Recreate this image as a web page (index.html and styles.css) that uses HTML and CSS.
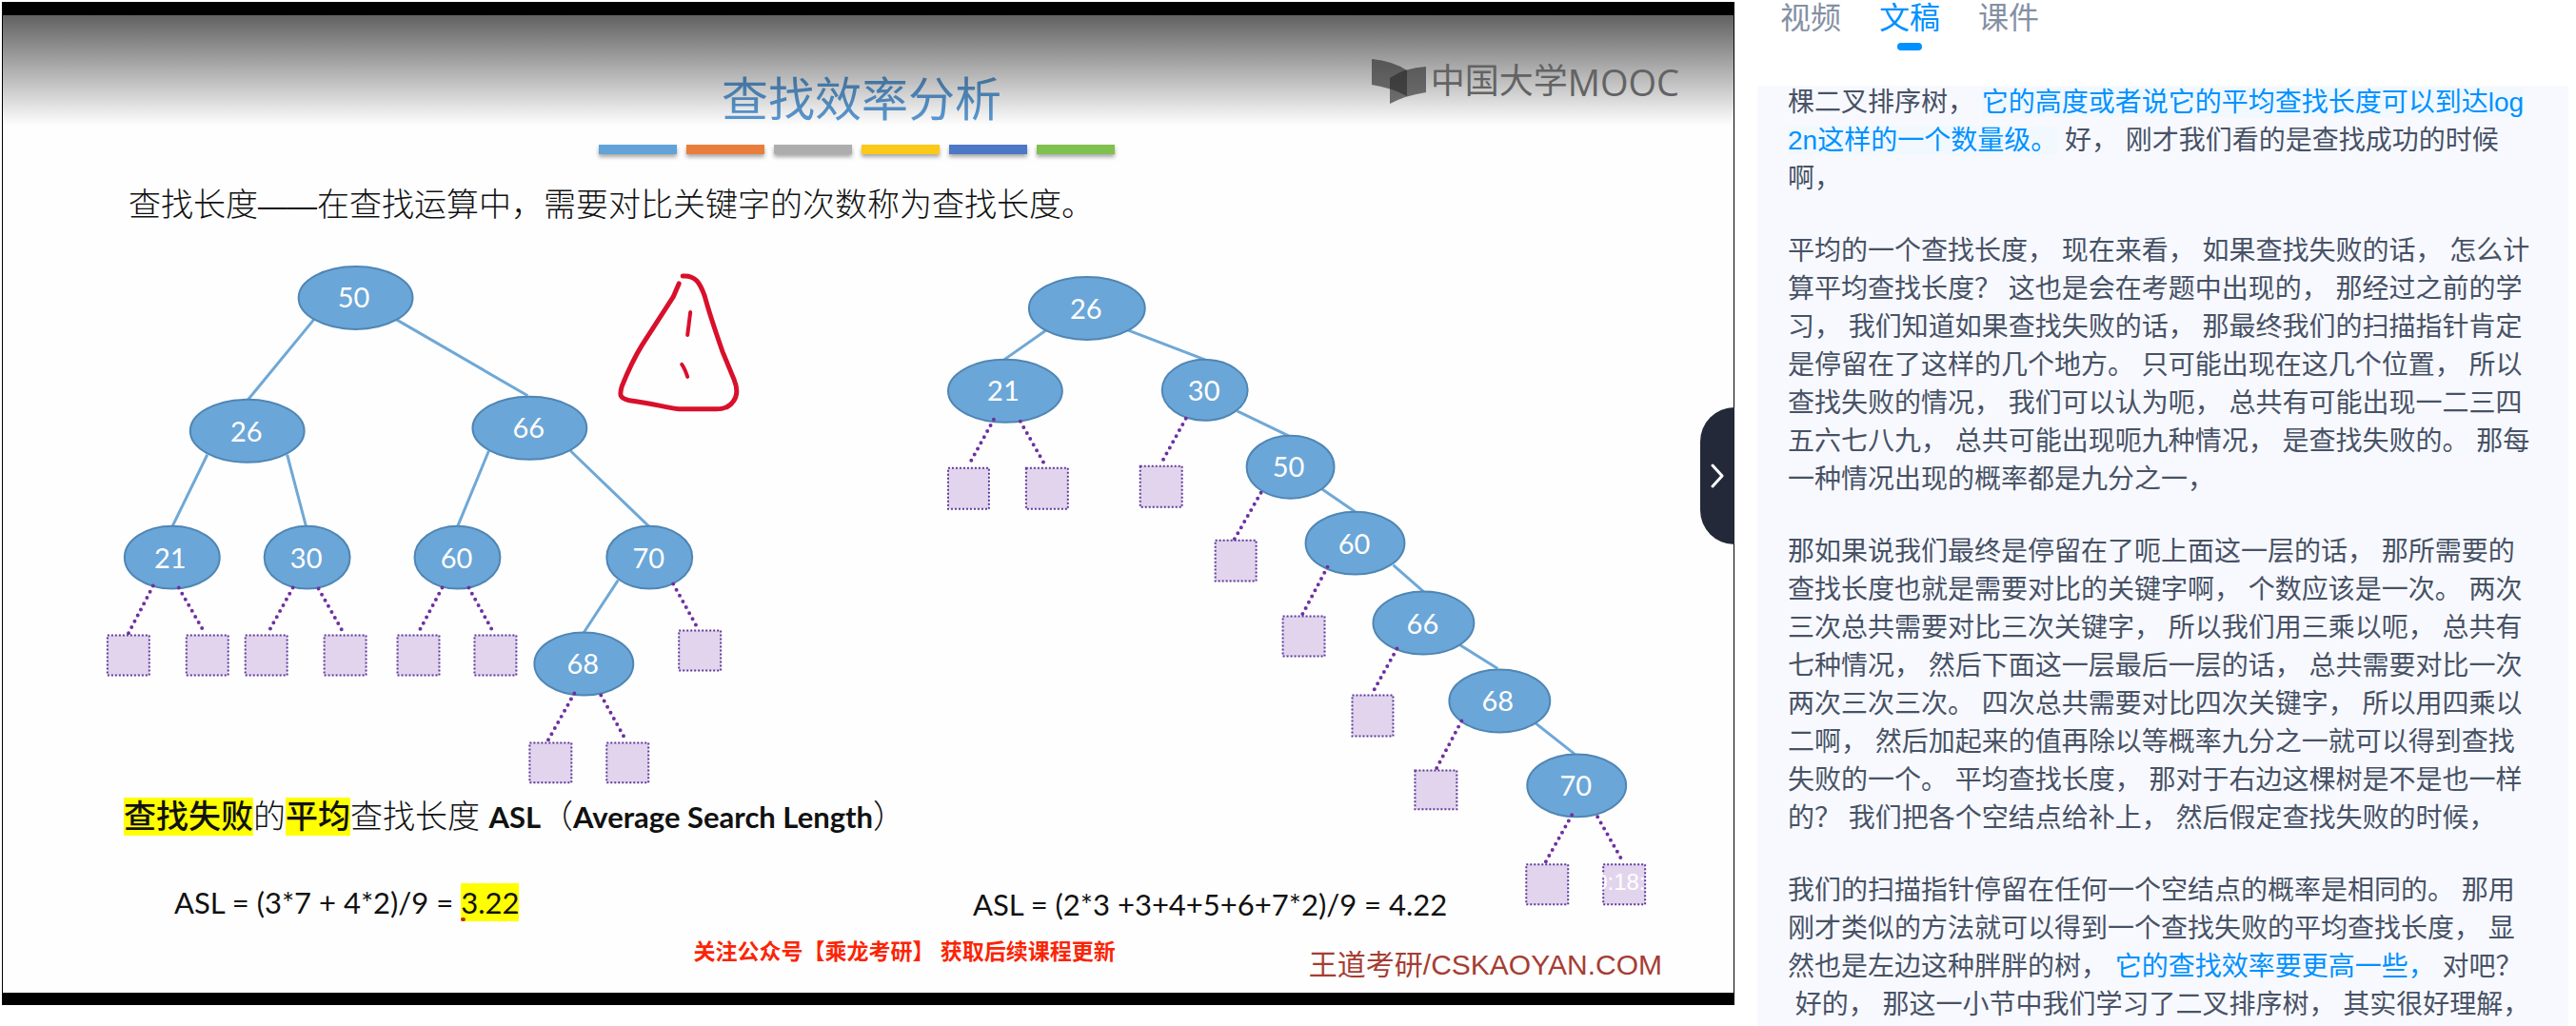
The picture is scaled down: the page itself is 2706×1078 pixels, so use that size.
FILE: index.html
```html
<!DOCTYPE html>
<html lang="zh-CN">
<head>
<meta charset="utf-8">
<title>查找效率分析</title>
<link rel="stylesheet" href="styles.css">
</head>
<body>
<div class="page">
  <main class="player">
    <article class="slide">
      <h1 class="slide-title">查找效率分析</h1>
      <div class="bars">
        <span class="bar bar-sky"></span><span class="bar bar-orange"></span><span class="bar bar-gray"></span><span class="bar bar-yellow"></span><span class="bar bar-blue"></span><span class="bar bar-green"></span>
      </div>
      <p class="definition">查找长度<span class="dash">——</span>在查找运算中，需要对比关键字的次数称为查找长度。</p>
      <div class="trees">
        <svg class="tree tree-left" viewBox="3 260 958 568" role="img" aria-label="平衡的二叉排序树">
          <g class="edge">
            <path d="M330 335L261 419M417 335L555 415M218 477L181 553M302 477L322 553M514 473L481 553M600 473L683 553M650 609L614 664"/>
          </g>
          <g class="node">
            <ellipse cx="374" cy="312" rx="60" ry="33"/><ellipse cx="260" cy="452" rx="60" ry="33"/><ellipse cx="557" cy="449" rx="60" ry="33"/>
            <ellipse cx="181" cy="585" rx="50" ry="33"/><ellipse cx="323" cy="585" rx="45" ry="33"/><ellipse cx="481" cy="585" rx="45" ry="33"/>
            <ellipse cx="683" cy="585" rx="45" ry="33"/><ellipse cx="614" cy="697" rx="52" ry="33"/>
          </g>
          <g class="null-edge">
            <path d="M161 615L135 665"/><path d="M188 617L215 664"/><path d="M308 617L282 664"/><path d="M335 618L361 664"/><path d="M465 617L440 664"/><path d="M493 617L519 664"/><path d="M708 613L734 660"/><path d="M604 728L576 778"/><path d="M632 730L658 777"/>
          </g>
          <g class="leaf">
            <rect x="113" y="667" width="44" height="42"/><rect x="196" y="667" width="44" height="42"/><rect x="258" y="667" width="44" height="42"/><rect x="341" y="667" width="44" height="42"/><rect x="418" y="667" width="44" height="42"/><rect x="499" y="667" width="44" height="42"/><rect x="714" y="662" width="44" height="42"/><rect x="557" y="780" width="44" height="42"/><rect x="638" y="780" width="44" height="42"/>
          </g>
          <g class="label">
            <text x="372" y="322">50</text><text x="259" y="463">26</text><text x="556" y="459">66</text><text x="179" y="596">21</text><text x="322" y="596">30</text><text x="480" y="596">60</text><text x="682" y="596">70</text><text x="613" y="708">68</text>
          </g>
          <g class="pen">
            <path class="pen-bold" d="M718 289C731 288 736 296 741 310C747 332 753 349 760 369L772 398C776 408 775 416 771 421C767 427 760 429 753 429L714 429C700 427 684 423 662 420C650 417 652 413 654 405C660 390 667 375 675 362L708 311L714 297"/>
            <path d="M726 327L723 351M717 382Q720 386 723 395"/>
          </g>
        </svg>
        <h2 class="heading"><mark>查找失败</mark>的<mark>平均</mark>查找长度 <b class="latin">ASL</b>（<b class="latin">Average Search Length</b>）</h2>
        <p class="formula formula-left">ASL = (3*7 + 4*2)/9 = <mark class="result">3.22</mark></p>
        <svg class="tree tree-right" viewBox="960 260 862 700" role="img" aria-label="不平衡的二叉排序树">
          <g class="edge">
            <path d="M1099 346L1055 377M1185 346L1266 377M1300 431L1354 457M1389 513L1424 537M1464 593L1496 621M1534 677L1574 702M1612 758L1655 792"/>
          </g>
          <g class="node">
            <ellipse cx="1142" cy="323" rx="61" ry="33"/><ellipse cx="1056" cy="410" rx="60" ry="33"/><ellipse cx="1266" cy="409" rx="45" ry="32"/><ellipse cx="1356" cy="490" rx="46" ry="33"/><ellipse cx="1424" cy="570" rx="52" ry="33"/><ellipse cx="1496" cy="654" rx="53" ry="33"/><ellipse cx="1576" cy="736" rx="53" ry="33"/><ellipse cx="1657" cy="825" rx="52" ry="33"/>
          </g>
          <g class="null-edge">
            <path d="M1044 440L1017 489"/><path d="M1072 442L1098 488"/><path d="M1246 439L1219 488"/><path d="M1325 517L1297 566"/><path d="M1395 595L1368 646"/><path d="M1468 681L1442 728"/><path d="M1536 757L1509 808"/><path d="M1652 856L1624 906"/><path d="M1679 858L1705 904"/>
          </g>
          <g class="leaf">
            <rect x="996" y="491" width="43" height="43"/><rect x="1078" y="491" width="44" height="43"/><rect x="1198" y="489" width="44" height="43"/><rect x="1277" y="567" width="43" height="43"/><rect x="1348" y="647" width="44" height="42"/><rect x="1421" y="730" width="43" height="43"/><rect x="1487" y="809" width="44" height="41"/><rect x="1604" y="908" width="44" height="42"/><rect x="1685" y="908" width="44" height="42"/>
          </g>
          <g class="label">
            <text x="1141" y="334">26</text><text x="1054" y="420">21</text><text x="1265" y="420">30</text><text x="1354" y="500">50</text><text x="1423" y="581">60</text><text x="1495" y="665">66</text><text x="1574" y="747">68</text><text x="1656" y="836">70</text>
          </g>
          <text class="clock" x="1676" y="935">0:18:</text>
        </svg>
        <p class="formula formula-right">ASL = (2*3 +3+4+5+6+7*2)/9 = 4.22</p>
      </div>
      <footer class="slide-footer">
        <p class="notice">关注公众号【乘龙考研】 获取后续课程更新</p>
        <p class="site">王道考研/CSKAOYAN.COM</p>
      </footer>
    </article>
    <div class="shade"></div>
    <div class="brand">
      <svg class="brand-mark" width="57" height="48" viewBox="0 0 57 48" aria-hidden="true">
        <path d="M0 0Q22 2 37 12V39Q20 30 0 27Z"/><path d="M19 20Q35 9 57 8V35Q36 38 19 47Z"/>
      </svg>
      <span class="brand-cn">中国大学</span><span class="brand-en">MOOC</span>
    </div>
    <button class="collapse" type="button" aria-label="收起侧栏">
      <svg width="14" height="26" viewBox="0 0 14 26" aria-hidden="true"><path d="M2 2L12 13L2 24"/></svg>
    </button>
  </main>
  <aside class="side">
    <nav class="tabs">
      <button class="tab" type="button">视频</button>
      <button class="tab tab-active" type="button">文稿</button>
      <button class="tab" type="button">课件</button>
    </nav>
    <div class="transcript">
      <p>棵二叉排序树， <span class="key key-bg">它的高度或者说它的平均查找长度可以到达log2n这样的一个数量级。</span> 好， 刚才我们看的是查找成功的时候啊，</p>
      <p>平均的一个查找长度， 现在来看， 如果查找失败的话， 怎么计算平均查找长度？ 这也是会在考题中出现的， 那经过之前的学习， 我们知道如果查找失败的话， 那最终我们的扫描指针肯定是停留在了这样的几个地方。 只可能出现在这几个位置， 所以查找失败的情况， 我们可以认为呃， 总共有可能出现一二三四五六七八九， 总共可能出现呃九种情况， 是查找失败的。 那每一种情况出现的概率都是九分之一，</p>
      <p>那如果说我们最终是停留在了呃上面这一层的话， 那所需要的查找长度也就是需要对比的关键字啊， 个数应该是一次。 两次三次总共需要对比三次关键字， 所以我们用三乘以呃， 总共有七种情况， 然后下面这一层最后一层的话， 总共需要对比一次两次三次三次。 四次总共需要对比四次关键字， 所以用四乘以二啊， 然后加起来的值再除以等概率九分之一就可以得到查找失败的一个。 平均查找长度， 那对于右边这棵树是不是也一样的？ 我们把各个空结点给补上， 然后假定查找失败的时候，</p>
      <p>我们的扫描指针停留在任何一个空结点的概率是相同的。 那用刚才类似的方法就可以得到一个查找失败的平均查找长度， 显然也是左边这种胖胖的树， <span class="key">它的查找效率要更高一些，</span> 对吧？<br>&nbsp;好的， 那这一小节中我们学习了二叉排序树， 其实很好理解，</p>
    </div>
  </aside>
</div>
</body>
</html>
```

FILE: styles.css
```css
* {
  box-sizing: border-box;
}

body {
  margin: 0;
  background: #fff;
  font-family: "Liberation Sans", "Noto Sans CJK SC", sans-serif;
}

h1, h2, p {
  margin: 0;
  font-weight: 400;
}

button {
  border: 0;
  padding: 0;
  background: none;
  font: inherit;
  cursor: pointer;
}

.page {
  display: grid;
  grid-template-columns: 1820fr 852fr;
  gap: 24px;
  align-items: start;
  height: 100vh;
  padding: 0 8px 0 2px;
  overflow: hidden;
}

/* Player */

.player {
  position: relative;
  margin-top: 2px;
  padding: 14px 1px 13px;
  background: #000;
}

.slide {
  padding-top: 59px;
  background: #fefefe;
  color: #111;
}

.slide-title {
  padding-right: 14px;
  color: #5b9bd5;
  font-size: 49px;
  line-height: 60px;
  text-align: center;
}

.bars {
  display: flex;
  justify-content: center;
  gap: 10px;
  margin-top: 17px;
  padding-right: 24px;
}

.bar {
  width: 82px;
  height: 10px;
  box-shadow: 0 3px 4px rgba(0, 0, 0, 0.35);
}

.bar-sky { background: #62a2d8; }
.bar-orange { background: #e97e3a; }
.bar-gray { background: #adadad; }
.bar-yellow { background: #fbc918; }
.bar-blue { background: #4c78c5; }
.bar-green { background: #7fc04e; }

.definition {
  margin-top: 33px;
  padding-left: 132px;
  font-size: 34px;
  font-weight: 300;
  line-height: 40px;
}

.dash {
  font-size: 31px;
  line-height: 1;
}

.latin,
.formula,
.label {
  font-family: Lato, "Noto Sans CJK SC", sans-serif;
}

.trees {
  display: grid;
  grid-template-columns: 958fr 862fr;
  grid-template-rows: auto auto auto;
  margin-top: 26px;
}

.tree {
  display: block;
  width: 100%;
}

.tree-left { grid-area: 1 / 1; }
.tree-right { grid-area: 1 / 2 / 4 / 3; }

.heading {
  grid-area: 2 / 1;
  margin-top: 10px;
  padding-left: 127px;
  font-size: 34px;
  font-weight: 300;
  line-height: 40px;
  white-space: nowrap;
}

.latin {
  font-size: 31px;
  font-weight: 700;
  line-height: 1;
}

mark {
  position: relative;
  display: inline-block;
  background: #ff0;
  color: #111;
  line-height: 40px;
}

.heading mark {
  font-weight: 500;
}

/* Stray pen dot under the result */
.result::after {
  content: "";
  position: absolute;
  bottom: 0;
  left: 0;
  width: 5px;
  height: 4px;
  border-radius: 2px;
  background: #b8320c;
}

.formula {
  font-size: 31px;
  line-height: 40px;
  white-space: nowrap;
}

.formula-left {
  grid-area: 3 / 1;
  margin-top: 50px;
  padding-left: 180px;
}

.formula-right {
  grid-area: 3 / 2;
  margin-top: 52px;
  padding-left: 62px;
}

.edge {
  fill: none;
  stroke: #6fa8d6;
  stroke-width: 3;
}

.node {
  fill: #6ba6d8;
  stroke: #4f86b4;
  stroke-width: 2;
}

.null-edge {
  fill: none;
  stroke: #7030a0;
  stroke-width: 4;
  stroke-linecap: round;
  stroke-dasharray: 0 7;
}

.leaf {
  fill: #e3d4ee;
  stroke: #5c3a9a;
  stroke-width: 2;
  stroke-dasharray: 2 2;
}

.label {
  fill: #fff;
  font-size: 29px;
  text-anchor: middle;
}

.clock {
  fill: #fff;
  font-size: 24px;
}

.pen {
  fill: none;
  stroke: #d8102c;
  stroke-width: 4;
  stroke-linecap: round;
  stroke-linejoin: round;
}

.pen-bold {
  stroke-width: 5;
}

.slide-footer {
  display: flex;
  justify-content: flex-end;
  gap: 203px;
  height: 73px;
  padding: 15px 75px 0 0;
  line-height: 30px;
  white-space: nowrap;
}

.notice {
  color: #fb2405;
  font-size: 23px;
  font-weight: 700;
}

.site {
  margin-top: 14px;
  color: #a63d33;
  font-size: 30px;
}

.shade {
  position: absolute;
  inset: 14px 0 auto;
  height: 116px;
  background: linear-gradient(rgba(0, 0, 0, 0.62), rgba(0, 0, 0, 0));
}

.brand {
  position: absolute;
  top: 60px;
  right: 58px;
  display: flex;
  align-items: center;
  color: #636363;
}

.brand-mark {
  margin-right: 5px;
  fill: rgba(40, 40, 40, 0.62);
}

.brand-cn {
  font-size: 36px;
  line-height: 48px;
}

.brand-en {
  font-family: "Open Sans", sans-serif;
  font-size: 38px;
  line-height: 48px;
}

.collapse {
  position: absolute;
  top: 426px;
  right: 0;
  display: flex;
  align-items: center;
  justify-content: center;
  width: 36px;
  height: 144px;
  border-radius: 36px 0 0 36px;
  background: #232938;
}

.collapse path {
  fill: none;
  stroke: #fff;
  stroke-width: 3;
  stroke-linecap: round;
  stroke-linejoin: round;
}

/* Side panel */

.side {
  display: flex;
  flex-direction: column;
  height: 100vh;
}

.tabs {
  display: flex;
  flex: none;
  gap: 40px;
  height: 90px;
  padding-left: 24px;
}

.tab {
  display: flex;
  flex-direction: column;
  align-items: center;
  height: 53px;
  color: #8490a3;
  font-size: 32px;
  line-height: 38px;
}

.tab-active {
  color: #0091ff;
}

.tab-active::after {
  content: "";
  width: 26px;
  height: 8px;
  margin-top: 7px;
  border-radius: 4px;
  background: #0091ff;
}

.transcript {
  display: flex;
  flex: 1;
  flex-direction: column;
  gap: 36px;
  min-height: 0;
  padding: 0 32px;
  overflow: hidden;
  background: #f8f9fe;
  color: #475266;
  font-size: 28px;
  line-height: 40px;
  word-break: break-all;
}

.transcript p:first-child {
  margin-top: -2px;
}

.key {
  color: #0091ff;
}

.key-bg {
  background: #f1f9ff;
}
```
